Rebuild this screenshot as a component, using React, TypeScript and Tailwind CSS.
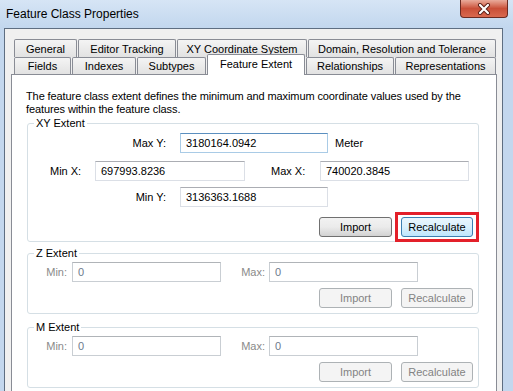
import React from "react";

interface TabDef {
  label: string;
  w: string;
  selected?: boolean;
}

const tabRow1: TabDef[] = [
  { label: "General", w: "w-[63px]" },
  { label: "Editor Tracking", w: "w-[98px]" },
  { label: "XY Coordinate System", w: "w-[130px]" },
  { label: "Domain, Resolution and Tolerance", w: "w-[188px]" },
];

const tabRow2: TabDef[] = [
  { label: "Fields", w: "w-[57px]" },
  { label: "Indexes", w: "w-[64px]" },
  { label: "Subtypes", w: "w-[69px]" },
  { label: "Feature Extent", w: "w-[98px]", selected: true },
  { label: "Relationships", w: "w-[88px]" },
  { label: "Representations", w: "w-[101px]" },
];

const Tab = ({ tab, back }: { tab: TabDef; back?: boolean }) => {
  if (tab.selected) {
    return (
      <div
        className={`${tab.w} relative z-10 flex h-[21px] items-start justify-center rounded-t-[2px] border border-b-0 border-[#898c95] bg-white pt-[2px] leading-[14px]`}
      >
        {tab.label}
      </div>
    );
  }
  return (
    <div
      className={`${tab.w} ${back ? "h-[18px]" : "mt-[3px] h-[17px]"} flex items-center justify-center rounded-t-[2px] border border-b-0 border-[#898c95] bg-linear-to-b from-[#f4f4f4] to-[#e2e2e2] leading-[14px]`}
    >
      {tab.label}
    </div>
  );
};

const Field = ({
  value,
  w,
  disabled,
  focused,
}: {
  value: string;
  w: string;
  disabled?: boolean;
  focused?: boolean;
}) => (
  <div
    className={`${w} flex h-[20px] items-center border bg-white px-[5px] ${
      focused
        ? "border-[#a9cbe6] border-t-[#5b8fbf]"
        : disabled
          ? "border-[#c9ced3] border-t-[#b0b4b8] text-[#6d7a8c]"
          : "border-[#dbdfe6] border-t-[#abadb3]"
    }`}
  >
    {value}
  </div>
);

const Btn = ({
  label,
  w,
  variant,
}: {
  label: string;
  w: string;
  variant: "normal" | "hot" | "disabled";
}) => {
  const look =
    variant === "hot"
      ? "border-[#3c7fb1] bg-linear-to-b from-[#eaf6fd] via-[#d9f0fc] to-[#bee6fd] text-black"
      : variant === "disabled"
        ? "border-[#adb2b5] bg-[#f4f4f4] text-[#838383]"
        : "border-[#707070] bg-linear-to-b from-[#f2f2f2] via-[#ebebeb] to-[#d2d2d2] text-black";
  return (
    <div
      className={`${w} ${look} flex h-[20px] items-center justify-center rounded-[3px] border leading-[14px]`}
    >
      {label}
    </div>
  );
};

const GroupBox = ({
  title,
  className,
  children,
}: {
  title: string;
  className: string;
  children: React.ReactNode;
}) => (
  <div
    className={`relative ml-[1px] w-[452px] rounded-[3px] border border-[#d5dfe5] ${className}`}
  >
    <span className="absolute -top-[8px] left-[6px] bg-white px-[2px] leading-[14px]">
      {title}
    </span>
    {children}
  </div>
);

const DisabledExtent = ({ title, className }: { title: string; className: string }) => (
  <GroupBox title={title} className={`pt-[8px] pb-[5px] ${className}`}>
    <div className="flex items-center">
      <span className="w-[44px] pr-[5px] text-right text-[#8a8a8a]">Min:</span>
      <Field value="0" w="w-[149px]" disabled />
      <span className="w-[48px] pr-[4px] text-right text-[#8a8a8a]">Max:</span>
      <Field value="0" w="w-[149px]" disabled />
    </div>
    <div className="mt-[6px] flex justify-end gap-[9px] pr-[5px]">
      <Btn label="Import" w="w-[73px]" variant="disabled" />
      <Btn label="Recalculate" w="w-[72px]" variant="disabled" />
    </div>
  </GroupBox>
);

export default function App() {
  return (
    <div className="flex h-[391px] w-[513px] flex-col overflow-hidden bg-[#c3d7ee] font-['Liberation_Sans',Arial,sans-serif] text-[11px] text-black">
      {/* title bar */}
      <div className="flex h-[28px] shrink-0 items-start justify-between bg-linear-to-b from-[#d6e5f5] to-[#c2d7ee]">
        <div className="pt-[6px] pl-[6px] text-[12px] leading-[16px]">
          Feature Class Properties
        </div>
        <div className="mr-[5px] flex h-[18px] w-[48px] items-center justify-center rounded-b-[4px] border border-t-0 border-[#6b2b22] bg-linear-to-b from-[#e9ab9b] via-[#c94f38] to-[#d9694f]">
          <svg width="14" height="12" viewBox="0 0 14 12">
            <path d="M3 2 L11 10 M11 2 L3 10" stroke="#5a1d15" strokeWidth="4" strokeLinecap="round" />
            <path d="M3 2 L11 10 M11 2 L3 10" stroke="#ffffff" strokeWidth="2.2" strokeLinecap="round" />
          </svg>
        </div>
      </div>

      <div className="flex min-h-0 flex-1">
        <div className="w-[4px]" />
        <div className="flex w-[499px] flex-col border-t border-r border-l border-[#5e6e82] bg-[#f0f0f0] pt-[10px] pr-[5px] pl-[6px]">
          {/* tabs */}
          <div className="pl-[3px]">
            <div className="flex gap-[1px]">
              {tabRow1.map((t) => (
                <Tab key={t.label} tab={t} back />
              ))}
            </div>
            <div className="-mt-[3px] flex h-[21px] gap-[1px]">
              {tabRow2.map((t) => (
                <Tab key={t.label} tab={t} />
              ))}
            </div>
          </div>

          {/* panel */}
          <div className="-mt-px h-[330px] shrink-0 border border-[#898c95] bg-white pt-[15px] pl-[14px]">
            <p className="leading-[13px] tracking-[-0.1px]">
              The feature class extent defines the minimum and maximum coordinate values used by the
              <br />
              features within the feature class.
            </p>

            <GroupBox title="XY Extent" className="mt-[7px] pt-[9px] pb-[4px]">
              <div className="flex items-center">
                <span className="w-[138px] text-right">Max Y:</span>
                <div className="ml-[14px]">
                  <Field value="3180164.0942" w="w-[148px]" focused />
                </div>
                <span className="ml-[7px]">Meter</span>
              </div>
              <div className="mt-[8px] flex items-center">
                <span className="ml-[22px] w-[45px]">Min X:</span>
                <Field value="697993.8236" w="w-[150px]" />
                <span className="ml-[26px] w-[49px]">Max X:</span>
                <Field value="740020.3845" w="w-[149px]" />
              </div>
              <div className="mt-[6px] flex items-center">
                <span className="w-[138px] text-right">Min Y:</span>
                <div className="ml-[14px]">
                  <Field value="3136363.1688" w="w-[148px]" />
                </div>
              </div>
              <div className="mt-[10px] flex justify-end gap-[9px] pr-[5px]">
                <Btn label="Import" w="w-[73px]" variant="normal" />
                <div className="relative">
                  <Btn label="Recalculate" w="w-[72px]" variant="hot" />
                  <div className="absolute -inset-x-[6px] -inset-y-[5px] border-[3px] border-[#e3202a]" />
                </div>
              </div>
            </GroupBox>

            <DisabledExtent title="Z Extent" className="mt-[11px]" />
            <DisabledExtent title="M Extent" className="mt-[13px]" />
          </div>
        </div>
      </div>
    </div>
  );
}
